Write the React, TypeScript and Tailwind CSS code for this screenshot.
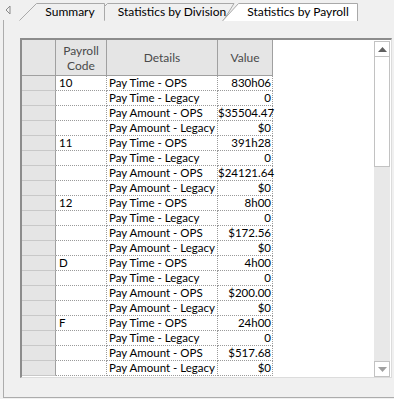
import React from "react";

const ROWS = [
  { code: "10", values: ["830h06", "0", "$35504.47", "$0"] },
  { code: "11", values: ["391h28", "0", "$24121.64", "$0"] },
  { code: "12", values: ["8h00", "0", "$172.56", "$0"] },
  { code: "D", values: ["4h00", "0", "$200.00", "$0"] },
  { code: "F", values: ["24h00", "0", "$517.68", "$0"] },
];

const DETAILS = [
  "Pay Time - OPS",
  "Pay Time - Legacy",
  "Pay Amount - OPS",
  "Pay Amount - Legacy",
];

function TabStrip() {
  return (
    <div className="relative h-[20px] text-[12px] text-black">
      {/* tab outlines */}
      <svg className="absolute inset-0" width="394" height="21" viewBox="0 0 394 21">
        <path d="M19.5 20.5 L36.5 3.5 L104.5 3.5 L104.5 20.5" fill="#f0f0f0" stroke="#a9a9a9" />
        <path d="M104.5 20.5 L104.5 6.5 L107.5 3.5 L234 3.5 L223.5 20.5" fill="#f0f0f0" stroke="#a9a9a9" />
        <path d="M222.5 21 L238.5 3.5 L357.5 3.5 L357.5 21" fill="#ffffff" stroke="#a9a9a9" />
        <path d="M10 6 L6 10 L10 14 Z" fill="none" stroke="#8a8a8a" />
      </svg>
      <div className="relative flex h-[20px] items-center pt-[3px] pl-[36px]">
        <span className="w-[68px] text-center">Summary</span>
        <span className="w-[136px] text-center">Statistics by Division</span>
        <span className="w-[116px] text-center">Statistics by Payroll</span>
      </div>
    </div>
  );
}

function Scrollbar() {
  return (
    <div className="w-[17px] flex flex-col pt-[1px] pr-[1px]">
      <div className="h-[16px] border border-[#c2c2c2] bg-white flex items-center justify-center">
        <svg width="9" height="5" viewBox="0 0 9 5">
          <path d="M0 5 L4.5 0 L9 5 Z" fill="#606060" />
        </svg>
      </div>
      <div className="h-[110px] border border-t-0 border-[#c2c2c2] bg-white" />
      <div className="flex-1 bg-[#e8e8e8]" />
      <div className="h-[16px] border border-[#c2c2c2] bg-white flex items-center justify-center">
        <svg width="9" height="5" viewBox="0 0 9 5">
          <path d="M0 0 L4.5 5 L9 0 Z" fill="#a0a0a0" />
        </svg>
      </div>
    </div>
  );
}

function Grid() {
  return (
    <div className="flex bg-white border-t-2 border-l-2 border-[#8c8c8c] border-r border-b border-r-[#dcdcdc] border-b-[#dcdcdc] h-[340px] text-[11.5px]">
      <div className="flex flex-col w-[251px]">
        <div className="flex h-[36px] bg-[#e5e5e5] text-[#4a4a4a] border-b border-[#a0a0a0] text-[12px]">
          <div className="w-[34px] border-r border-[#a0a0a0]" />
          <div className="w-[51px] border-r border-[#a0a0a0] flex items-center justify-center text-center leading-[15px]">
            Payroll
            <br />
            Code
          </div>
          <div className="w-[111px] border-r border-[#a0a0a0] flex items-center justify-center">Details</div>
          <div className="w-[55px] border-r border-[#a0a0a0] flex items-center justify-center">Value</div>
        </div>
        {ROWS.map((r) =>
          DETAILS.map((d, i) => (
            <div key={r.code + d} className="flex h-[15px] leading-[14px]">
              <div className="w-[34px] bg-[#e5e5e5] border-r border-[#a0a0a0] border-b border-b-[#c8c8c8]" />
              <div className="w-[51px] pl-[3px] border-r border-dotted border-[#9a9a9a] border-b">{i === 0 ? r.code : ""}</div>
              <div className="w-[111px] pl-[2px] border-r border-dotted border-[#9a9a9a] border-b whitespace-nowrap">{d}</div>
              <div className="w-[55px] pr-[1px] text-right border-r border-dotted border-[#9a9a9a] border-b whitespace-nowrap">{r.values[i]}</div>
            </div>
          ))
        )}
      </div>
      <div className="flex-1" />
      <Scrollbar />
    </div>
  );
}

export default function App() {
  return (
    <div
      className="w-[394px] h-[399px] bg-[#f0f0f0] overflow-hidden text-[12px] text-black"
      style={{ fontFamily: 'Lato, "Liberation Sans", sans-serif' }}
    >
      <TabStrip />
      <div className="ml-[3px] w-[392px] h-[378px] border border-t-0 border-[#acacac] pl-[16px] pt-[18px] pr-[2px]">
        <Grid />
      </div>
    </div>
  );
}
